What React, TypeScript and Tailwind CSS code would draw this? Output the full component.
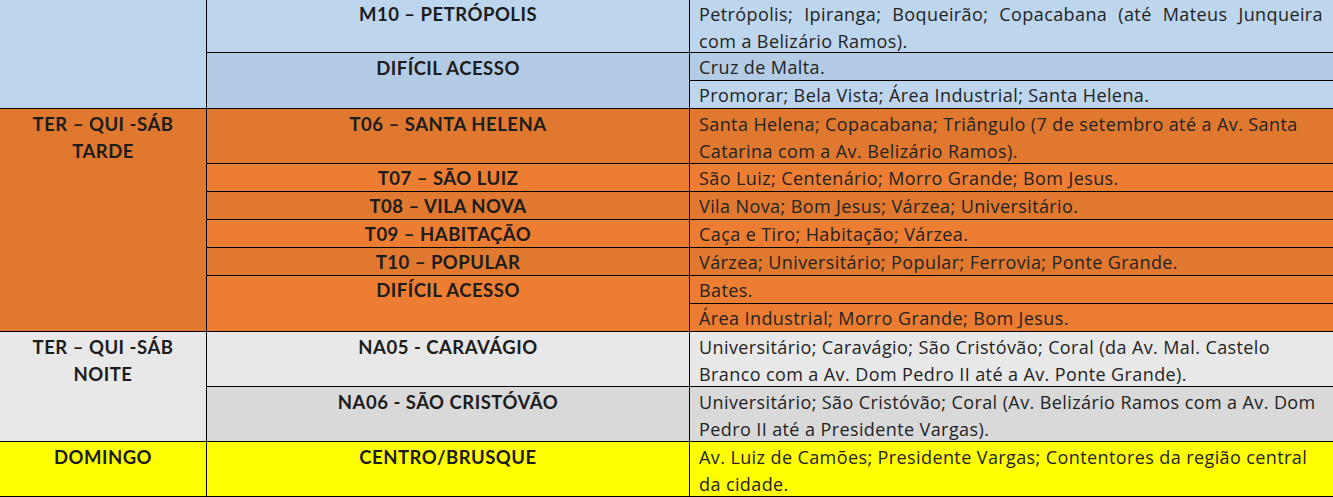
import React from 'react';

// Tabela de coleta — recorte de uma planilha com 3 colunas (dia, setor, bairros)

const head = "font-['Lato',sans-serif] font-bold text-[18.5px] tracking-[0.5px] leading-[27px] text-[#1c1c1c] text-center whitespace-nowrap";
const body = "font-['Open_Sans',sans-serif] text-[18px] tracking-[0.4px] leading-[27px] text-[#232323] pl-[9px] pr-[10px] whitespace-nowrap";

const App = () => {
  return (
    <div className="w-[1333px] h-[497px] overflow-hidden bg-white">
      <div className="grid grid-cols-[207px_483px_643px] grid-rows-[53px_28px_28px_55px_28px_28px_28px_28px_28px_28px_55px_55px_55px]">
        {/* manhã — azul */}
        <div className="row-span-3 col-start-1 row-start-1 bg-[#bdd6ed] border-r border-b border-black" />
        <div className={`col-start-2 row-start-1 bg-[#bdd6ed] border-r border-b border-black pt-[1px] ${head}`}>M10 – PETRÓPOLIS</div>
        <div className={`col-start-3 row-start-1 bg-[#bdd6ed] border-b border-black pt-[1px] ${body}`}>
          <div className="[text-align-last:justify]">Petrópolis; Ipiranga; Boqueirão; Copacabana (até Mateus Junqueira</div>
          <div>com a Belizário Ramos).</div>
        </div>
        <div className={`row-span-2 col-start-2 row-start-2 bg-[#b3cbe4] border-r border-b border-black pt-[2px] ${head}`}>DIFÍCIL ACESSO</div>
        <div className={`col-start-3 row-start-2 bg-[#b3cbe4] border-b border-black pt-[1px] ${body}`}>Cruz de Malta.</div>
        <div className={`col-start-3 row-start-3 bg-[#bdd6ed] border-b border-black pt-[1px] ${body}`}>Promorar; Bela Vista; Área Industrial; Santa Helena.</div>

        {/* tarde — laranja */}
        <div className={`row-span-7 col-start-1 row-start-4 bg-[#e0792f] border-r border-b border-black pt-[2px] ${head}`}>
          TER – QUI -SÁB
          <br />
          TARDE
        </div>
        <div className={`col-start-2 row-start-4 bg-[#e0792f] border-r border-b border-black pt-[2px] ${head}`}>T06 – SANTA HELENA</div>
        <div className={`col-start-3 row-start-4 bg-[#e0792f] border-b border-black pt-[2px] ${body}`}>
          Santa Helena; Copacabana; Triângulo (7 de setembro até a Av. Santa
          <br />
          Catarina com a Av. Belizário Ramos).
        </div>
        <div className={`col-start-2 row-start-5 bg-[#ed7d32] border-r border-b border-black pt-[1px] ${head}`}>T07 – SÃO LUIZ</div>
        <div className={`col-start-3 row-start-5 bg-[#ed7d32] border-b border-black pt-[1px] ${body}`}>São Luiz; Centenário; Morro Grande; Bom Jesus.</div>
        <div className={`col-start-2 row-start-6 bg-[#e0792f] border-r border-b border-black pt-[1px] ${head}`}>T08 – VILA NOVA</div>
        <div className={`col-start-3 row-start-6 bg-[#e0792f] border-b border-black pt-[1px] ${body}`}>Vila Nova; Bom Jesus; Várzea; Universitário.</div>
        <div className={`col-start-2 row-start-7 bg-[#ed7d32] border-r border-b border-black pt-[1px] ${head}`}>T09 – HABITAÇÃO</div>
        <div className={`col-start-3 row-start-7 bg-[#ed7d32] border-b border-black pt-[1px] ${body}`}>Caça e Tiro; Habitação; Várzea.</div>
        <div className={`col-start-2 row-start-8 bg-[#e0792f] border-r border-b border-black pt-[1px] ${head}`}>T10 – POPULAR</div>
        <div className={`col-start-3 row-start-8 bg-[#e0792f] border-b border-black pt-[1px] ${body}`}>Várzea; Universitário; Popular; Ferrovia; Ponte Grande.</div>
        <div className={`row-span-2 col-start-2 row-start-9 bg-[#ed7d32] border-r border-b border-black pt-[1px] ${head}`}>DIFÍCIL ACESSO</div>
        <div className={`col-start-3 row-start-9 bg-[#ed7d32] border-b border-black pt-[1px] ${body}`}>Bates.</div>
        <div className={`col-start-3 row-start-10 bg-[#ec7c31] border-b border-black pt-[1px] ${body}`}>Área Industrial; Morro Grande; Bom Jesus.</div>

        {/* noite — cinza */}
        <div className={`row-span-2 col-start-1 row-start-11 bg-[#e8e8e8] border-r border-b border-black pt-[2px] ${head}`}>
          TER – QUI -SÁB
          <br />
          NOITE
        </div>
        <div className={`col-start-2 row-start-11 bg-[#e8e8e8] border-r border-b border-black pt-[2px] ${head}`}>NA05 - CARAVÁGIO</div>
        <div className={`col-start-3 row-start-11 bg-[#e8e8e8] border-b border-black pt-[2px] ${body}`}>
          Universitário; Caravágio; São Cristóvão; Coral (da Av. Mal. Castelo
          <br />
          Branco com a Av. Dom Pedro II até a Av. Ponte Grande).
        </div>
        <div className={`col-start-2 row-start-12 bg-[#d9d9d9] border-r border-b border-black pt-[2px] ${head}`}>NA06 - SÃO CRISTÓVÃO</div>
        <div className={`col-start-3 row-start-12 bg-[#d9d9d9] border-b border-black pt-[2px] ${body}`}>
          Universitário; São Cristóvão; Coral (Av. Belizário Ramos com a Av. Dom
          <br />
          Pedro II até a Presidente Vargas).
        </div>

        {/* domingo — amarelo */}
        <div className={`col-start-1 row-start-13 bg-[#ffff00] border-r border-b border-black pt-[2px] ${head}`}>DOMINGO</div>
        <div className={`col-start-2 row-start-13 bg-[#ffff00] border-r border-b border-black pt-[2px] ${head}`}>CENTRO/BRUSQUE</div>
        <div className={`col-start-3 row-start-13 bg-[#ffff00] border-b border-black pt-[2px] ${body}`}>
          Av. Luiz de Camões; Presidente Vargas; Contentores da região central
          <br />
          da cidade.
        </div>
      </div>
    </div>
  );
};

export default App;
